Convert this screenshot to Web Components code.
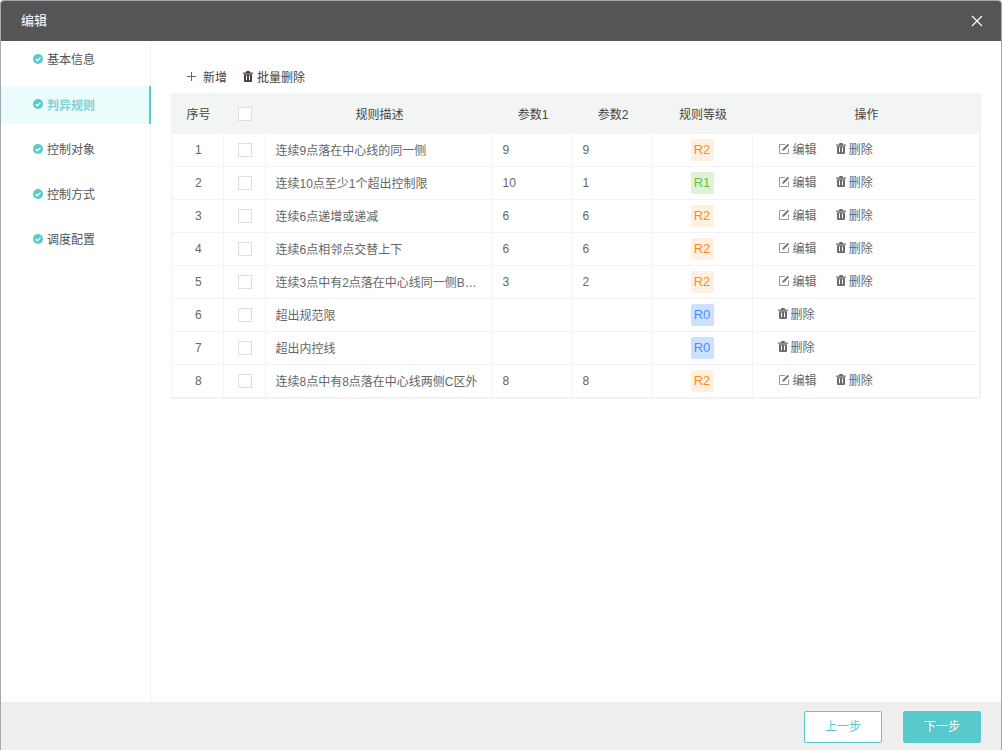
<!DOCTYPE html>
<html lang="zh">
<head>
<meta charset="utf-8">
<title>编辑</title>
<style>
	html, body { margin: 0; height: 100%; background: #fff; }
	body { font-family: "Liberation Sans", "Noto Sans CJK SC", sans-serif; font-size: 12px; }
</style>
</head>
<body>
<edit-dialog heading="编辑">
	<side-nav slot="nav">
		<nav-item>基本信息</nav-item>
		<nav-item active>判异规则</nav-item>
		<nav-item>控制对象</nav-item>
		<nav-item>控制方式</nav-item>
		<nav-item>调度配置</nav-item>
	</side-nav>
	<tool-bar>
		<tool-button icon="plus">新增</tool-button>
		<tool-button icon="trash">批量删除</tool-button>
	</tool-bar>
	<rule-table></rule-table>
	<step-button slot="footer">上一步</step-button>
	<step-button slot="footer" primary>下一步</step-button>
</edit-dialog>

<script>
(() => {
	// ======
	// Icons.
	// ======

	const ICONS = {
		plus: '<svg width="9" height="9" viewBox="0 0 9 9"><path d="M4.5 0v9M0 4.5h9" stroke="currentColor" fill="none"/></svg>',
		trash: '<svg width="10" height="11" viewBox="0 0 10 12" preserveAspectRatio="none"><path fill="currentColor" fill-rule="evenodd" d="M3.5 0h3l.5 1.5h2.5a.5.5 0 0 1 .5.5v1H0V2a.5.5 0 0 1 .5-.5H3zM1 3.5h8V11a1 1 0 0 1-1 1H2a1 1 0 0 1-1-1zM3 5v5h1V5zM6 5v5h1V5z"/></svg>',
		edit: '<svg width="11" height="11" viewBox="0 0 11 11"><path fill="none" stroke="#999" d="M9.5 5.5v5h-9v-9h5.5"/><path fill="#777" d="M3.5 6l5.2-5.2 1.4 1.4L5 7.4l-1.8.3z"/></svg>',
		check: '<svg width="10" height="10" viewBox="0 0 10 10"><circle cx="5" cy="5" r="5" fill="#58c9cc"/><path d="M2.6 5.1l1.7 1.7 3.2-3.2" fill="none" stroke="#fff" stroke-width="1.3"/></svg>',
		close: '<svg width="12" height="12" viewBox="0 0 12 12"><path d="M1 1l10 10M11 1L1 11" stroke="currentColor" stroke-width="1.2" fill="none"/></svg>'
	};

	// =====
	// Data.
	// =====

	const RULES = [
		['连续9点落在中心线的同一侧', '9', '9', 'R2', true],
		['连续10点至少1个超出控制限', '10', '1', 'R1', true],
		['连续6点递增或递减', '6', '6', 'R2', true],
		['连续6点相邻点交替上下', '6', '6', 'R2', true],
		['连续3点中有2点落在中心线同一侧B区外', '3', '2', 'R2', true],
		['超出规范限', '', '', 'R0', false],
		['超出内控线', '', '', 'R0', false],
		['连续8点中有8点落在中心线两侧C区外', '8', '8', 'R2', true]
	];

	// =======
	// Helper.
	// =======

	const define = (name, markup) => {
		window.customElements.define(name, class extends HTMLElement {
			constructor() {
				super();
				this.attachShadow({ mode: 'open' });
				this.shadowRoot.innerHTML = typeof markup === 'function' ? markup(this) : markup;
			}
		});
	};

	// =======
	// Dialog.
	// =======

	define('edit-dialog', (el) => `
		<style>
			:host {
				box-sizing: border-box;
				display: flex;
				flex-direction: column;
				height: 750px;
				border: 1px solid #a3a9ae;
				border-bottom: 0;
				border-radius: 4px 4px 0 0;
				overflow: hidden;
			}
			header {
				display: flex;
				align-items: center;
				justify-content: space-between;
				flex: none;
				height: 40px;
				padding: 0 18px 0 20px;
				background: #555;
				color: #fff;
				font-size: 13px;
			}
			header span { padding-bottom: 4px; }
			header svg { display: block; }
			.body { display: flex; flex: 1; min-height: 0; }
			.nav { flex: none; width: 149px; border-right: 1px solid #eef0f0; }
			main { flex: 1; padding: 25px 20px 0 20px; min-width: 0; }
			footer {
				display: flex;
				justify-content: flex-end;
				gap: 21px;
				flex: none;
				height: 48px;
				padding: 9px 20px 0 0;
				box-sizing: border-box;
				background: #eee;
			}
		</style>
		<header><span>${el.getAttribute('heading')}</span>${ICONS.close}</header>
		<div class="body">
			<div class="nav"><slot name="nav"></slot></div>
			<main><slot></slot></main>
		</div>
		<footer><slot name="footer"></slot></footer>
	`);

	// ==========
	// Side menu.
	// ==========

	define('side-nav', `
		<style>:host { display: block; margin-top: -4px; }</style>
		<slot></slot>
	`);

	define('nav-item', `
		<style>
			:host {
				display: flex;
				align-items: center;
				gap: 4px;
				box-sizing: border-box;
				height: 45px;
				padding: 0 0 2px 32px;
				color: #555;
			}
			:host([active]) {
				background: #ebfcfd;
				border-right: 2px solid #58c9cc;
				color: #7fd3d5;
				font-weight: bold;
				height: 38px;
				margin: 4px -1px 3px 0;
			}
			svg { display: block; }
		</style>
		${ICONS.check}<slot></slot>
	`);

	// ========
	// Toolbar.
	// ========

	define('tool-bar', `
		<style>
			:host { display: flex; gap: 16px; height: 27px; padding-left: 16px; }
		</style>
		<slot></slot>
	`);

	define('tool-button', (el) => `
		<style>
			:host { display: inline-flex; align-items: center; gap: 7px; height: 20px; color: #444; }
			:host([icon="trash"]) { gap: 4px; }
			svg { display: block; }
			.plus { color: #666; }
			.trash { color: #4a3c3c; }
		</style>
		<span class="${el.getAttribute('icon')}" style="display:flex">${ICONS[el.getAttribute('icon')]}</span><slot></slot>
	`);

	// ======
	// Table.
	// ======

	define('level-tag', (el) => `
		<style>
			:host {
				display: inline-block;
				width: 23px;
				height: 22px;
				line-height: 22px;
				border-radius: 2px;
				text-align: center;
				font-size: 13px;
				vertical-align: middle;
			}
			:host([level="R2"]) { background: #fff0e0; color: #ff8a24; }
			:host([level="R1"]) { background: #dff2d8; color: #67c23a; }
			:host([level="R0"]) { background: #cce0ff; color: #4d8dff; }
		</style>
		${el.getAttribute('level')}
	`);

	define('check-box', `
		<style>
			:host {
				display: inline-block;
				box-sizing: border-box;
				width: 14px;
				height: 14px;
				border: 1px solid #dcdfe0;
				background: #fff;
				vertical-align: middle;
			}
		</style>
	`);

	define('row-action', (el) => `
		<style>
			:host { display: inline-flex; align-items: center; gap: 3px; color: #666; }
			svg { display: block; }
			.icon { display: flex; color: #6a6a6a; }
		</style>
		<span class="icon">${ICONS[el.getAttribute('icon')]}</span><slot></slot>
	`);

	const renderRow = ([text, one, two, level, editable], index) => `
		<tr>
			<td class="center shift">${index + 1}</td>
			<td class="center shift"><check-box></check-box></td>
			<td><div class="clip">${text}</div></td>
			<td>${one}</td>
			<td>${two}</td>
			<td class="center"><level-tag level="${level}"></level-tag></td>
			<td class="ops ${editable ? '' : 'only'}">
				${editable ? '<row-action icon="edit">编辑</row-action>' : ''}
				<row-action icon="trash">删除</row-action>
			</td>
		</tr>
	`;

	define('rule-table', `
		<style>
			:host {
				display: block;
				box-sizing: border-box;
				width: 810px;
				border: 1px solid #f1f2f2;
				border-width: 0 2px 2px 1px;
				border-radius: 2px;
				font-size: 12px;
				color: #666;
			}
			table { border-collapse: collapse; table-layout: fixed; width: 100%; }
			th {
				height: 41px;
				padding: 0 0 0 2px;
				background: #f3f5f5;
				color: #444;
				font-weight: normal;
				text-align: center;
			}
			td {
				box-sizing: border-box;
				height: 33px;
				padding: 0 10px;
				border: 1px solid #f3f3f3;
				border-top: 0;
			}
			tbody tr:first-child td { height: 32px; }
			td:first-child { border-left: 0; }
			td:last-child { border-right: 0; }
			tr:last-child td { border-bottom: 0; }
			.center { text-align: center; padding: 0; }
			.shift { padding-left: 2px; }
			.clip { overflow: hidden; white-space: nowrap; text-overflow: ellipsis; }
			.ops { padding: 0 0 2px 26px; }
			.ops.only { padding-left: 25px; }
			.ops row-action + row-action { margin-left: 16px; }
		</style>
		<table>
			<colgroup>
				<col style="width:51px"><col style="width:42px"><col style="width:227px">
				<col style="width:80px"><col style="width:80px"><col style="width:100px"><col>
			</colgroup>
			<thead>
				<tr>
					<th>序号</th><th><check-box></check-box></th><th>规则描述</th>
					<th>参数1</th><th>参数2</th><th>规则等级</th><th>操作</th>
				</tr>
			</thead>
			<tbody>${RULES.map(renderRow).join('')}</tbody>
		</table>
	`);

	// ==============
	// Footer button.
	// ==============

	define('step-button', `
		<style>
			:host {
				display: flex;
				align-items: center;
				justify-content: center;
				box-sizing: border-box;
				width: 78px;
				height: 32px;
				padding-bottom: 4px;
				border: 1px solid #58c9cc;
				border-radius: 2px;
				background: #fff;
				color: #58c9cc;
			}
			:host([primary]) { background: #58c9cc; color: #fff; }
		</style>
		<slot></slot>
	`);
})();
</script>
</body>
</html>
